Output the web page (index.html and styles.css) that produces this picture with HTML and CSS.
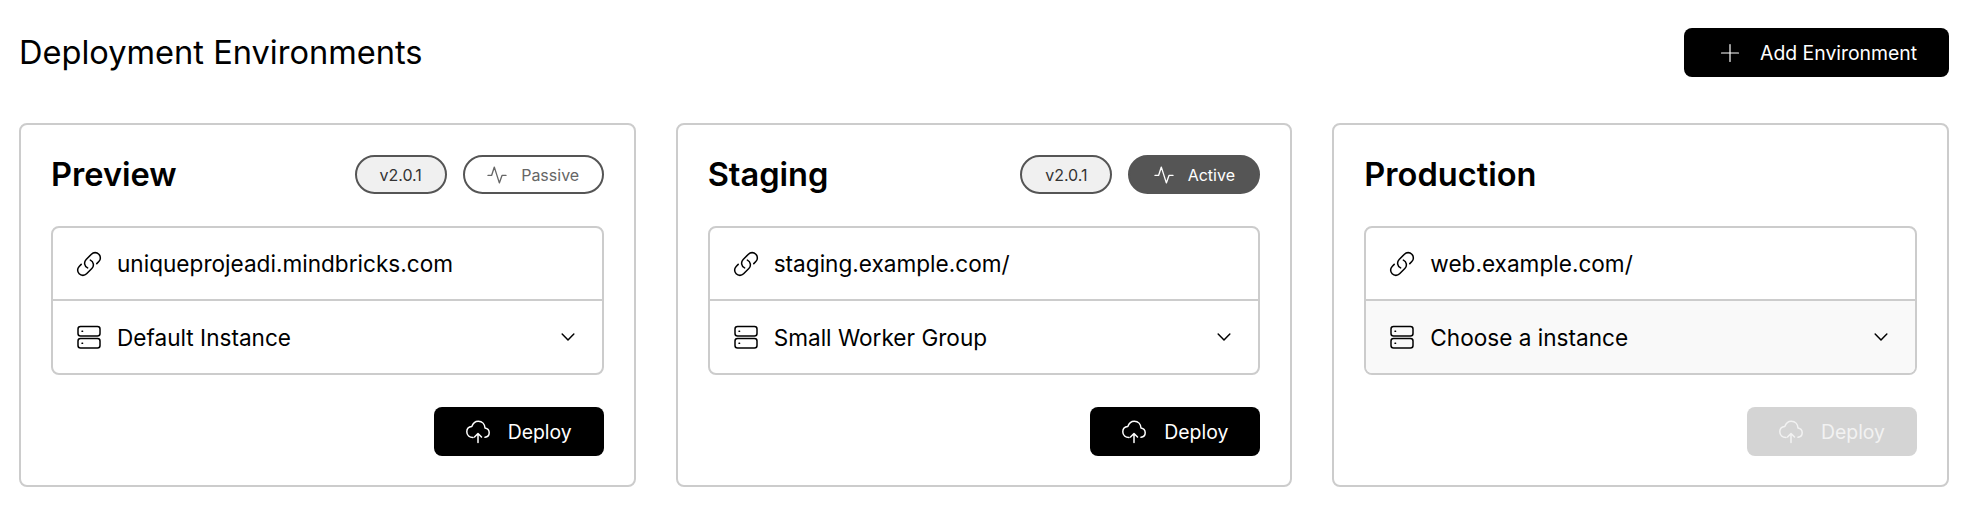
FILE: index.html
```html
<!DOCTYPE html>
<html lang="en">
<head>
  <meta charset="UTF-8" />
  <meta name="viewport" content="width=device-width, initial-scale=1.0"/>
  <title>Deployment Environments</title>
  <link rel="stylesheet" href="styles.css">
</head>
<body>

  <svg class="sprite" width="0" height="0">
    <symbol id="i-plus" viewBox="0 0 24 24"><path d="M3.5 12h17M12 3.5v17"/></symbol>
    <symbol id="i-pulse" viewBox="0 0 24 24"><path d="M1.2 12.5H5.5L8.8 2.5l6 19 3.2-9h4.8"/></symbol>
    <symbol id="i-link" viewBox="0 0 24 24"><path d="M13.19 8.688a4.5 4.5 0 0 1 1.242 7.244l-4.5 4.5a4.5 4.5 0 0 1-6.364-6.364l1.757-1.757m13.35-.622 1.757-1.757a4.5 4.5 0 0 0-6.364-6.364l-4.5 4.5a4.5 4.5 0 0 0 1.242 7.244"/></symbol>
    <symbol id="i-server" viewBox="0 0 24 24">
      <rect x="1" y="1.5" width="22" height="9.5" rx="2.5"/>
      <rect x="1" y="13.5" width="22" height="9.5" rx="2.5"/>
      <path d="M5 6.2h.6M5 18.2h.6"/>
    </symbol>
    <symbol id="i-chevron" viewBox="0 0 24 24"><path d="M5 8.5l7 7 7-7"/></symbol>
    <symbol id="i-cloud" viewBox="0 0 24 24"><path d="M7 17.5C3.5 17.5.8 15.5.8 11.8.8 8.7 3 6.6 5.8 6.4 7 3 9.3 1.2 12.3 1.2c4 0 6.5 3 6.7 6.8 2.4.4 4.2 2.4 4.2 4.8s-1.8 4.2-4.2 4.5M12 22.5v-9M8.5 17l3.5-3.5 3.5 3.5"/></symbol>
  </svg>

  <div class="page">
    <header class="page-head">
      <h1>Deployment Environments</h1>
      <button class="btn btn-add">
        <svg class="icon icon-plus"><use href="#i-plus"/></svg>
        Add Environment
      </button>
    </header>

    <main class="env-grid">

      <!-- Preview -->
      <section class="env-card">
        <div class="env-head">
          <h2>Preview</h2>
          <div class="badges">
            <span class="badge badge-version">v2.0.1</span>
            <span class="badge badge-passive">
              <svg class="icon icon-pulse"><use href="#i-pulse"/></svg>
              Passive
            </span>
          </div>
        </div>
        <div class="env-box">
          <div class="env-row">
            <svg class="icon icon-link"><use href="#i-link"/></svg>
            <span>uniqueprojeadi.mindbricks.com</span>
          </div>
          <div class="env-row">
            <svg class="icon icon-server"><use href="#i-server"/></svg>
            <span>Default Instance</span>
            <svg class="icon icon-chevron"><use href="#i-chevron"/></svg>
          </div>
        </div>
        <div class="env-foot">
          <button class="btn btn-deploy">
            <svg class="icon icon-cloud"><use href="#i-cloud"/></svg>
            Deploy
          </button>
        </div>
      </section>

      <!-- Staging -->
      <section class="env-card">
        <div class="env-head">
          <h2>Staging</h2>
          <div class="badges">
            <span class="badge badge-version">v2.0.1</span>
            <span class="badge badge-active">
              <svg class="icon icon-pulse"><use href="#i-pulse"/></svg>
              Active
            </span>
          </div>
        </div>
        <div class="env-box">
          <div class="env-row">
            <svg class="icon icon-link"><use href="#i-link"/></svg>
            <span>staging.example.com/</span>
          </div>
          <div class="env-row">
            <svg class="icon icon-server"><use href="#i-server"/></svg>
            <span>Small Worker Group</span>
            <svg class="icon icon-chevron"><use href="#i-chevron"/></svg>
          </div>
        </div>
        <div class="env-foot">
          <button class="btn btn-deploy">
            <svg class="icon icon-cloud"><use href="#i-cloud"/></svg>
            Deploy
          </button>
        </div>
      </section>

      <!-- Production -->
      <section class="env-card">
        <div class="env-head">
          <h2>Production</h2>
        </div>
        <div class="env-box">
          <div class="env-row">
            <svg class="icon icon-link"><use href="#i-link"/></svg>
            <span>web.example.com/</span>
          </div>
          <div class="env-row env-row-muted">
            <svg class="icon icon-server"><use href="#i-server"/></svg>
            <span>Choose a instance</span>
            <svg class="icon icon-chevron"><use href="#i-chevron"/></svg>
          </div>
        </div>
        <div class="env-foot">
          <button class="btn btn-deploy btn-disabled" disabled>
            <svg class="icon icon-cloud"><use href="#i-cloud"/></svg>
            Deploy
          </button>
        </div>
      </section>

    </main>
  </div>

</body>
</html>
```

FILE: styles.css
```css
body {
  margin: 0;
  background-color: #fff;
  color: #000;
  font-family: Inter, "Liberation Sans", sans-serif;
}
.sprite {
  position: absolute;
}
.page {
  padding: 28px 23px 0 19px;
}
.page-head {
  display: flex;
  align-items: center;
  justify-content: space-between;
  margin-bottom: 46px;
}
h1 {
  margin: 0;
  font-size: 32.6px;
  font-weight: 400;
  line-height: 49px;
}
h2 {
  margin: 0;
  font-size: 32.6px;
  font-weight: 600;
  line-height: 39px;
}
.icon {
  fill: none;
  stroke: currentColor;
  stroke-width: 1.5;
  stroke-linecap: round;
  stroke-linejoin: round;
  flex-shrink: 0;
}
.btn {
  display: flex;
  align-items: center;
  height: 49px;
  border: none;
  border-radius: 8px;
  background-color: #000;
  color: #fff;
  font-family: inherit;
  font-size: 19.4px;
  padding: 0;
}
.btn-add {
  width: 265px;
  padding-left: 34px;
  gap: 18px;
}
.icon-plus {
  width: 24px;
  height: 24px;
  stroke-width: 1.2;
}
.env-grid {
  display: grid;
  grid-template-columns: repeat(3, 1fr);
  gap: 40px;
}
.env-card {
  border: 2px solid #ccc;
  border-radius: 8px;
  padding: 30px;
  height: 364px;
  box-sizing: border-box;
}
.env-head {
  display: flex;
  align-items: center;
  justify-content: space-between;
  height: 39px;
  margin-bottom: 32px;
}
.badges {
  display: flex;
  gap: 16px;
}
.badge {
  display: flex;
  align-items: center;
  justify-content: center;
  box-sizing: border-box;
  height: 39px;
  border: 2px solid #555;
  border-radius: 20px;
  font-size: 16px;
}
.badge-version {
  width: 92px;
  background-color: #f0f0f0;
  color: #333;
}
.badge-passive {
  width: 141px;
  gap: 14px;
  color: #666;
}
.badge-active {
  width: 132px;
  gap: 14px;
  background-color: #555;
  color: #fff;
}
.icon-pulse {
  width: 20px;
  height: 20px;
  stroke-width: 1.6;
}
.env-box {
  border: 2px solid #ccc;
  border-radius: 8px;
  overflow: hidden;
}
.env-row {
  display: flex;
  align-items: center;
  height: 72px;
  padding: 0 24px 0 22px;
  font-size: 22.6px;
}
.env-row:first-child {
  height: 71px;
}
.env-row + .env-row {
  border-top: 2px solid #ccc;
}
.env-row span {
  flex: 1;
  margin-left: 14px;
}
.env-row-muted {
  background-color: #f9f9f9;
}
.icon-link {
  width: 28px;
  height: 28px;
  stroke-width: 1.3;
}
.icon-server {
  width: 24px;
  height: 24px;
  margin: 0 2px;
}
.icon-chevron {
  width: 20px;
  height: 20px;
  stroke-width: 1.8;
}
.env-foot {
  display: flex;
  justify-content: flex-end;
  margin-top: 32px;
}
.btn-deploy {
  width: 170px;
  justify-content: center;
  gap: 18px;
}
.icon-cloud {
  width: 24px;
  height: 24px;
}
.btn-disabled {
  background-color: #d4d4d4;
  color: #f2f2f2;
}
```
